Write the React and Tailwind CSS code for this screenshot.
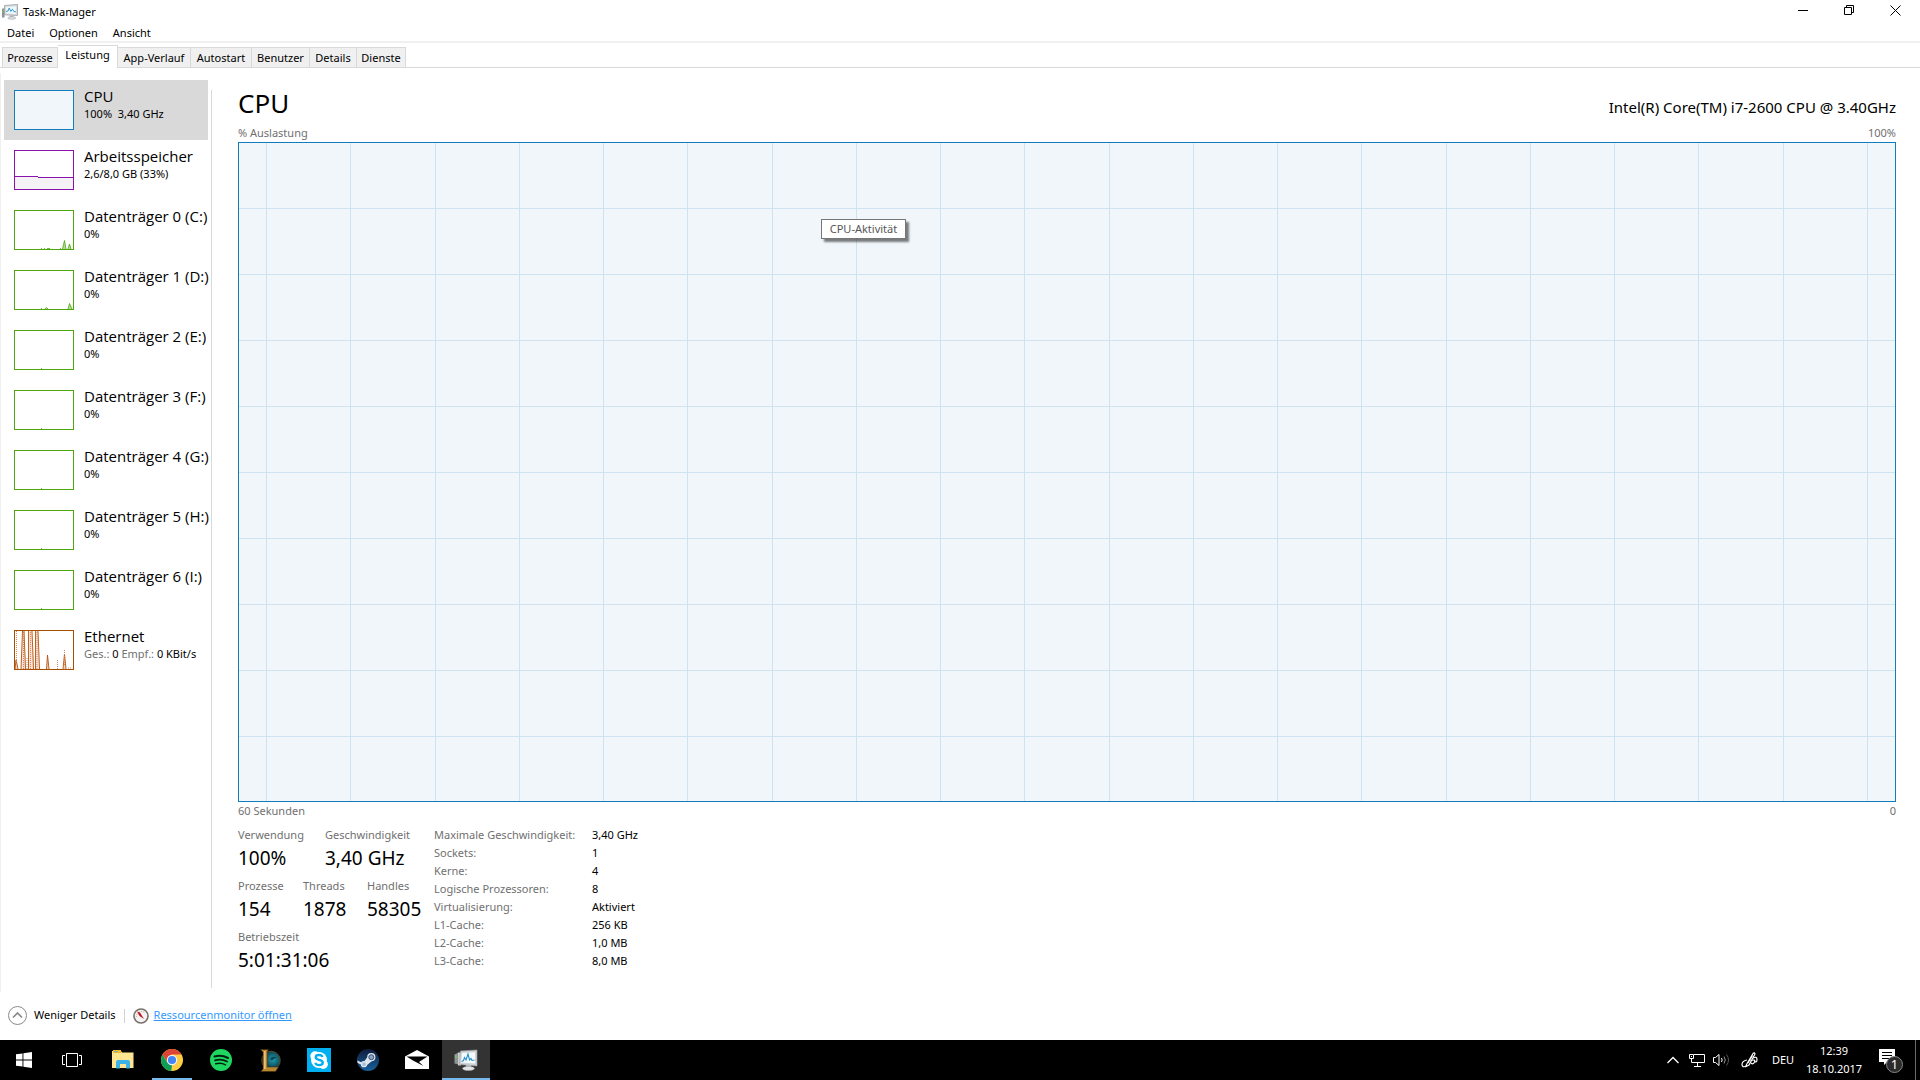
import React, { useState } from 'react';

const tabs = [
  { label: 'Prozesse', width: 'w-[56px]' },
  { label: 'Leistung', width: 'w-[60px]' },
  { label: 'App-Verlauf', width: 'w-[73px]' },
  { label: 'Autostart', width: 'w-[61px]' },
  { label: 'Benutzer', width: 'w-[58px]' },
  { label: 'Details', width: 'w-[47px]' },
  { label: 'Dienste', width: 'w-[49px]' }
];

const tick = 'M27 38.5h1';

const resources = [
  { name: 'CPU', value: '100%  3,40 GHz', kind: 'cpu' },
  { name: 'Arbeitsspeicher', value: '2,6/8,0 GB (33%)', kind: 'memory' },
  {
    name: 'Datenträger 0 (C:)',
    value: '0%',
    kind: 'disk',
    path: 'M27 38.5h1M30 38.5h1M33 38.5h3M46 38.5h1M48.5 39L50.5 30.5L52 39M54 39L55.5 34L57 39'
  },
  { name: 'Datenträger 1 (D:)', value: '0%', kind: 'disk', path: 'M27 38.5h1M31 39L32.5 37.5L34 39M54 39L55.5 33.5L58 39' },
  { name: 'Datenträger 2 (E:)', value: '0%', kind: 'disk', path: tick },
  { name: 'Datenträger 3 (F:)', value: '0%', kind: 'disk', path: tick },
  { name: 'Datenträger 4 (G:)', value: '0%', kind: 'disk', path: tick },
  { name: 'Datenträger 5 (H:)', value: '0%', kind: 'disk', path: tick },
  { name: 'Datenträger 6 (I:)', value: '0%', kind: 'disk', path: tick },
  { name: 'Ethernet', kind: 'network' }
];

const details = [
  ['Maximale Geschwindigkeit:', '3,40 GHz'],
  ['Sockets:', '1'],
  ['Kerne:', '4'],
  ['Logische Prozessoren:', '8'],
  ['Virtualisierung:', 'Aktiviert'],
  ['L1-Cache:', '256 KB'],
  ['L2-Cache:', '1,0 MB'],
  ['L3-Cache:', '8,0 MB']
];

function MonitorIcon({ size }) {
  return (
    <svg width={size} height={size} viewBox="0 0 16 16" aria-hidden="true">
      <path d="M0 4.5h2.5v9H0z" fill="#8d9296" />
      <path d="M.5 5.5h1v3h-1z" fill="#7fc65b" />
      <path d="M2.5 1.5L15.5.5v11l-13-.7z" fill="#d9dcde" stroke="#8d9296" strokeWidth=".7" />
      <path d="M4 3l10-.8v7.9L4 9.6z" fill="#eaf7fd" />
      <path d="M4 7.5l2-.5 1.2-3 1.6 3.4 1.6-2.2 1.4 2.3 2.2.3" fill="none" stroke="#2a8fc8" strokeWidth=".9" />
      <path d="M8 11.2h3.2l.5 2.3H7.6z" fill="#b4b8bb" />
      <ellipse cx="9.8" cy="14" rx="4" ry="1.3" fill="#dcdfe1" stroke="#9a9ea1" strokeWidth=".5" />
    </svg>
  );
}

function Thumbnail({ kind, path }) {
  return (
    <svg width="60" height="40" viewBox="0 0 60 40" className="shrink-0" aria-hidden="true">
      {kind === 'cpu' && <rect x=".5" y=".5" width="59" height="39" fill="#f1f6fa" stroke="#117dbb" />}
      {kind === 'memory' && (
        <>
          <rect x=".5" y=".5" width="59" height="39" fill="#fff" />
          <path d="M1 26.5h23v1h35V39H1z" fill="#f4f2f4" />
          <path d="M1 26.5h23M24 27.5h35" stroke="#8b12ae" fill="none" />
          <rect x=".5" y=".5" width="59" height="39" fill="none" stroke="#8b12ae" />
        </>
      )}
      {kind === 'disk' && (
        <>
          <rect x=".5" y=".5" width="59" height="39" fill="#fff" stroke="#4da60c" />
          <path d={path} fill="#b8dc9b" stroke="#4da60c" strokeWidth=".8" />
        </>
      )}
      {kind === 'network' && (
        <>
          <rect x=".5" y=".5" width="59" height="39" fill="#fff" />
          <path d="M7 39L8.5 1h2L12 39zM14 39L15 1h3l2 38zM21 39L21.5 1h2.5L25.5 39z" fill="#f6e2d6" />
          <path
            d="M1 39L2 30L3 34L4 39M7 39L8.5 1M10 1L11.5 39M14.5 39V1M18 1L19.5 39M21.5 39V1M24 1L25.5 39M32.5 39L33.5 25L35 39M49 39L50.5 24L52 39"
            fill="#e0a988"
            fillOpacity=".5"
            stroke="#b35410"
            strokeWidth=".9"
          />
          <path d="M2.5 1V33M9.5 2V39M13 39V27M16.5 2V39M23 2V39M43.5 39V30M50.5 20V36M54 38h3" fill="none" stroke="#dc8559" strokeDasharray="1 1" />
          <rect x=".5" y=".5" width="59" height="39" fill="none" stroke="#a74f01" />
        </>
      )}
    </svg>
  );
}

function UsageChart() {
  const columns = Array.from({ length: 20 }, (_, i) => `${(((27.5 + i * 84.26) / 1656) * 100).toFixed(3)}%`);
  const rows = Array.from({ length: 9 }, (_, i) => `${((((i + 1) * 66 - 0.5) / 658) * 100).toFixed(3)}%`);

  return (
    <div className="relative flex-1 min-h-0 border border-[#117dbb] bg-[#f1f6fa]">
      <svg className="absolute inset-0 w-full h-full" stroke="#cee2f0" shapeRendering="crispEdges" aria-hidden="true">
        {columns.map((x) => (
          <line key={x} x1={x} x2={x} y1="0" y2="100%" />
        ))}
        {rows.map((y) => (
          <line key={y} x1="0" x2="100%" y1={y} y2={y} />
        ))}
      </svg>
      <div
        role="tooltip"
        className="absolute left-[582px] top-[76px] h-5 min-w-[85px] px-[5px] border border-[#767676] bg-white text-center text-[11px] leading-[18px] text-[#575757] whitespace-nowrap shadow-[3px_3px_2px_#00000080]"
      >
        CPU-Aktivität
      </div>
    </div>
  );
}

function Stat({ label, value, className }) {
  return (
    <div className={className}>
      <dt className="text-[11px] leading-[18px] text-[#707070]">{label}</dt>
      <dd className="text-[19px] leading-7">{value}</dd>
    </div>
  );
}

const taskbarApps = [
  {
    name: 'Explorer',
    icon: (
      <svg width="22" height="20" viewBox="0 0 22 20">
        <path d="M0 1h9l1 1.5h11.5V18H0z" fill="#ffe592" />
        <path d="M1 0h8v3H1z" fill="#f7b928" />
        <path d="M2.5 1h3v1.2h-3z" fill="#4db6e5" />
        <path d="M4 18.5V12q0-2 2-2h10q2 0 2 2v6.5h-4V14H8v4.5z" fill="#3bb1e8" />
      </svg>
    )
  },
  {
    name: 'Chrome',
    running: true,
    icon: (
      <svg width="22" height="22" viewBox="0 0 22 22">
        <circle cx="11" cy="11" r="11" fill="#ffcd41" />
        <path d="M1.5 5.5A11 11 0 0 1 20.5 5.5H11L6.7 13.5z" fill="#db4437" />
        <path d="M1.5 5.5L6.5 13.7L11 16L10.3 22A11 11 0 0 1 1.5 5.5z" fill="#0f9d58" />
        <circle cx="11" cy="11" r="5.2" fill="#f5f5f5" />
        <circle cx="11" cy="11" r="4.1" fill="#4285f4" />
      </svg>
    )
  },
  {
    name: 'Spotify',
    icon: (
      <svg width="22" height="22" viewBox="0 0 22 22">
        <circle cx="11" cy="11" r="11" fill="#1ed760" />
        <g fill="none" stroke="#06200f" strokeLinecap="round">
          <path d="M4.5 7.5Q11.5 5.5 18 9" strokeWidth="2.1" />
          <path d="M5 11.3Q11.5 9.5 17 12.5" strokeWidth="1.8" />
          <path d="M5.7 14.8Q11 13.3 15.5 15.8" strokeWidth="1.5" />
        </g>
      </svg>
    )
  },
  {
    name: 'League of Legends',
    icon: (
      <svg width="22" height="23" viewBox="0 0 22 23">
        <defs>
          <radialGradient id="lol" cx=".6" cy=".45" r=".55">
            <stop offset="0" stopColor="#1f9fae" />
            <stop offset="1" stopColor="#08303f" />
          </radialGradient>
        </defs>
        <circle cx="12" cy="11.5" r="9.3" fill="url(#lol)" stroke="#6d532a" strokeWidth=".8" />
        <path d="M11 10q3-4 7-1-3-.5-5 2.5z" fill="#0a4354" />
        <path d="M1.5.5h8l-1.2 2V18h11.2l-3 4.5H1.8L4 20V3z" fill="#b9862f" stroke="#3a2710" strokeWidth=".5" />
        <path d="M5 2h1.7v18H5z" fill="#e8c374" />
      </svg>
    )
  },
  {
    name: 'Skype',
    icon: (
      <svg width="24" height="24" viewBox="0 0 24 24">
        <path d="M0 0h24v24H0z" fill="#00aff0" />
        <circle cx="12" cy="12" r="8" fill="#fff" />
        <circle cx="8" cy="8" r="4.7" fill="#fff" />
        <circle cx="16.2" cy="16.2" r="4.7" fill="#fff" />
        <path
          d="M15.8 8.8Q14.5 7 12 7Q8.7 7 8.7 9.3Q8.7 11.2 12 11.8Q15.8 12.5 15.8 14.6Q15.8 17.2 12.2 17.2Q9.2 17.2 8.2 14.9"
          fill="none"
          stroke="#00aff0"
          strokeWidth="2.3"
        />
      </svg>
    )
  },
  {
    name: 'Steam',
    icon: (
      <svg width="22" height="22" viewBox="0 0 22 22">
        <defs>
          <linearGradient id="steam" x1="0" y1="0" x2="0" y2="1">
            <stop offset="0" stopColor="#101a3c" />
            <stop offset="1" stopColor="#17619c" />
          </linearGradient>
        </defs>
        <circle cx="11" cy="11" r="11" fill="url(#steam)" />
        <path d="M.2 11.5L6 14L10.3 8.3L15 12L9.5 16.5L6.5 18L4 15.5L.7 14z" fill="#dfe6ee" />
        <circle cx="7" cy="15.2" r="2.5" fill="#a9bfd6" stroke="#dfe6ee" strokeWidth="1.3" />
        <circle cx="14.3" cy="8.2" r="4.1" fill="#dfe6ee" />
        <circle cx="14.3" cy="8.2" r="2.5" fill="#8ea3bd" stroke="#1c3564" strokeWidth=".8" />
      </svg>
    )
  },
  {
    name: 'Mail',
    icon: (
      <svg width="24" height="20" viewBox="0 0 24 20">
        <path d="M0 6.5L12 0l12 6.5V19H0z" fill="#fff" />
        <path d="M1.5 6.5h21L14 12l4.5 4L8 10.5z" fill="#000" />
      </svg>
    )
  },
  {
    name: 'Task-Manager',
    running: true,
    active: true,
    icon: (
      <svg width="24" height="22" viewBox="0 0 24 22">
        <path d="M.5 5.5L4.5 3.5v12l-4-1z" fill="#8e9396" />
        <path d="M1.2 6.5h1.5V9H1.2z" fill="#7fc65b" />
        <path d="M4 3.5h3v13H4z" fill="#c9cccf" />
        <path d="M6.5 2L23 1v16L5.5 15.5z" fill="#cfd2d4" stroke="#9a9ea1" strokeWidth=".6" />
        <path d="M8 4l13-.8v11.3L7 13.5z" fill="#f2fafe" />
        <path d="M7.5 12.5l2-1 1-3L12 11l2-6 1.5 6L17 9.5l1 2 2.5-.5" fill="none" stroke="#2a8fc8" strokeWidth="1.1" />
        <path d="M12 16h5l.5 3h-6z" fill="#b4b8bb" />
        <ellipse cx="14.5" cy="19.5" rx="6" ry="2" fill="#e3e5e7" stroke="#9a9ea1" strokeWidth=".5" />
      </svg>
    )
  }
];

function Taskbar() {
  return (
    <footer className="flex h-10 shrink-0 bg-black text-white text-[11px]">
      <button aria-label="Start" className="flex w-12 items-center justify-center">
        <svg width="16" height="16" viewBox="0 0 16 16" fill="#fff">
          <path d="M0 2.3L6.5 1.4V7.5H0zM7.4 1.2L16 0v7.5H7.4zM0 8.5h6.5v6.1L0 13.7zM7.4 8.5H16V16l-8.6-1.2z" />
        </svg>
      </button>
      <button aria-label="Taskansicht" className="flex w-12 items-center justify-center">
        <svg width="20" height="14" viewBox="0 0 20 14" fill="none" stroke="#fff">
          <path d="M4.5.5h11v13h-11zM3 2.5H.5v9H3M17 2.5h2.5v9H17" />
        </svg>
      </button>
      <div className="flex gap-px ml-[3px]">
        {taskbarApps.map((app) => (
          <button
            key={app.name}
            aria-label={app.name}
            className={`relative flex w-12 items-center justify-center ${app.active ? 'bg-[#333]' : ''}`}
          >
            {app.icon}
            {app.running && (
              <span className={`absolute bottom-0 h-0.5 bg-[#76b9ed] ${app.active ? 'inset-x-0' : 'inset-x-1'}`} />
            )}
          </button>
        ))}
      </div>

      {/* Tray */}
      <div className="flex items-center ml-auto">
        <button aria-label="Ausgeblendete Symbole" className="flex w-6 justify-center">
          <svg width="12" height="8" viewBox="0 0 12 8" fill="none" stroke="#fff" strokeWidth="1.3">
            <path d="M.5 7L6 1.5L11.5 7" />
          </svg>
        </button>
        <button aria-label="Netzwerk" className="flex w-6 justify-center">
          <svg width="16" height="14" viewBox="0 0 16 14" fill="none" stroke="#fff">
            <path d="M5 1.5h10.5v8H2.5V6M.5 1.5h4v4h-4zM8.5 10v3M5 13.5h7M2 3.5h1" />
          </svg>
        </button>
        <button aria-label="Lautstärke" className="flex w-6 justify-center">
          <svg width="17" height="14" viewBox="0 0 17 14" fill="none" stroke="#fff">
            <path d="M.5 4.5h2L6 1.5v11L2.5 9.5h-2z" />
            <path d="M8.5 5q1.3 2 0 4" />
            <path d="M11 3.5q2.6 3.5 0 7" stroke="#999" />
            <path d="M13.5 1.5q4 5.5 0 11" stroke="#555" />
          </svg>
        </button>
        <button aria-label="Windows Ink" className="flex w-8 justify-center">
          <svg width="17" height="16" viewBox="0 0 17 16" fill="none" stroke="#fff" strokeWidth="1.2">
            <path d="M5.5 12.5L12 1.5q1.5-1.5 2 .5L8 13l-3 1.5zM7 11L11.5 3.5" />
            <path d="M6 8Q1 9 1 12.5T5.5 14M10 11q2 2 3.5-1T9.5 8.5M13 9.5q3 1.5 3-2T12 6" />
          </svg>
        </button>
        <button className="w-8 pl-1">DEU</button>
        <button className="w-[74px] leading-[18px] text-center">
          12:39
          <br />
          18.10.2017
        </button>
        <button aria-label="Benachrichtigungen" className="flex w-[44px] pl-2">
          <svg width="25" height="25" viewBox="0 0 25 25">
            <path d="M0 1h16v13H8l-3 3v-3H0z" fill="#fff" />
            <path d="M3 4.5h10M3 7.5h10M3 10.5h8" stroke="#000" />
            <circle cx="15.5" cy="16.5" r="8" fill="#2b2b2b" stroke="#888" />
            <text x="15.5" y="21" textAnchor="middle" fill="#fff" fontSize="13">
              1
            </text>
          </svg>
        </button>
        <button aria-label="Desktop anzeigen" className="w-[5px] h-10 border-l border-[#6b6b6b]" />
      </div>
    </footer>
  );
}

export default function App() {
  const [activeTab, setActiveTab] = useState('Leistung');
  const [selected, setSelected] = useState('CPU');

  return (
    <div className="flex flex-col h-screen bg-white text-black font-['Noto_Sans','Open_Sans',sans-serif]">
      {/* Title bar */}
      <header className="flex h-6 shrink-0 items-center px-0.5">
        <MonitorIcon size={16} />
        <h1 className="ml-[5px] text-[11px]">Task-Manager</h1>
        <div className="flex ml-auto pb-1">
          <button aria-label="Minimieren" className="flex w-[46px] justify-center">
            <svg width="10" height="11" viewBox="0 0 10 11" stroke="#000">
              <path d="M0 5.5h10" />
            </svg>
          </button>
          <button aria-label="Verkleinern" className="flex w-[46px] justify-center">
            <svg width="10" height="11" viewBox="0 0 10 11" fill="none" stroke="#000">
              <path d="M.5 2.5h7v7h-7zM2.5 2.5v-2h7v7h-2" />
            </svg>
          </button>
          <button aria-label="Schließen" className="flex w-[46px] justify-center">
            <svg width="11" height="11" viewBox="0 0 11 11" stroke="#000">
              <path d="M.5.5l10 10M10.5.5l-10 10" />
            </svg>
          </button>
        </div>
      </header>

      <nav className="flex shrink-0 gap-[15px] pl-[7px] border-b-2 border-[#f0f0f0] text-[11px] leading-[17px]">
        <button>Datei</button>
        <button>Optionen</button>
        <button>Ansicht</button>
      </nav>

      <div role="tablist" className="flex h-[25px] shrink-0 items-end pl-0.5 border-b border-[#d9d9d9] text-[11px] leading-[18px]">
        {tabs.map(({ label, width }) => (
          <button
            key={label}
            role="tab"
            aria-selected={label === activeTab}
            onClick={() => setActiveTab(label)}
            className={`${width} border-t border-r border-[#d9d9d9] ${
              label === activeTab ? 'h-[23px] -mb-px pb-1 bg-white' : 'h-5 first:border-l bg-[#f0f0f0]'
            }`}
          >
            {label}
          </button>
        ))}
      </div>

      <main className="flex flex-1 min-h-0 mt-[5px] pl-[3px] border-l border-[#f0f0f0]">
        {/* Resource list */}
        <div className="w-[204px] shrink-0 pt-[7px]">
          {resources.map((item) => (
            <button
              key={item.name}
              onClick={() => setSelected(item.name)}
              className={`flex w-full h-[60px] pt-[10px] pl-[10px] gap-[10px] text-left whitespace-nowrap ${item.name === selected ? 'bg-[#d9d9d9]' : ''}`}
            >
              <Thumbnail kind={item.kind} path={item.path} />
              <span className="flex flex-col -mt-1">
                <span className="text-[15px] leading-5 font-['Open_Sans','Noto_Sans',sans-serif]">{item.name}</span>
                <span className="text-[11px] leading-[15px] whitespace-pre">
                  {item.value || (
                    <>
                      <span className="text-[#707070]">Ges.:</span> 0 <span className="text-[#707070]">Empf.:</span> 0 KBit/s
                    </>
                  )}
                </span>
              </span>
            </button>
          ))}
        </div>
        <div className="w-px shrink-0 ml-[3px] mt-[17px] mb-1 bg-[#d9d9d9]" />

        {/* CPU details */}
        <section className="flex flex-col flex-1 min-w-0 pt-[9px] pl-[26px] pr-6">
          <div className="flex h-[42px] shrink-0 items-baseline justify-between">
            <h2 className="text-[26px] leading-[42px]">CPU</h2>
            <p className="text-[15px]">Intel(R) Core(TM) i7-2600 CPU @ 3.40GHz</p>
          </div>
          <div className="flex justify-between text-[11px] leading-[18px] text-[#707070]">
            <span>% Auslastung</span>
            <span>100%</span>
          </div>
          <UsageChart />
          <div className="flex justify-between text-[11px] leading-[18px] text-[#707070]">
            <span>60 Sekunden</span>
            <span>0</span>
          </div>

          <div className="flex shrink-0 mt-[6px] pb-[18px]">
            <dl className="flex flex-col w-[196px] gap-[5px]">
              <div className="flex">
                <Stat label="Verwendung" value="100%" className="w-[87px]" />
                <Stat label="Geschwindigkeit" value="3,40 GHz" />
              </div>
              <div className="flex">
                <Stat label="Prozesse" value="154" className="w-[65px]" />
                <Stat label="Threads" value="1878" className="w-16" />
                <Stat label="Handles" value="58305" />
              </div>
              <Stat label="Betriebszeit" value="5:01:31:06" />
            </dl>
            <table className="self-start text-[11px] leading-[18px] text-left">
              <tbody>
                {details.map(([label, value]) => (
                  <tr key={label}>
                    <th scope="row" className="w-[158px] p-0 font-normal text-[#707070]">
                      {label}
                    </th>
                    <td className="p-0">{value}</td>
                  </tr>
                ))}
              </tbody>
            </table>
          </div>
        </section>
      </main>

      <div className="flex h-12 shrink-0 items-center pl-2 pb-px text-[11px]">
        <button className="flex items-center gap-[7px]">
          <svg width="19" height="19" viewBox="0 0 19 19" fill="none" stroke="#8a8a8a">
            <circle cx="9.5" cy="9.5" r="9" />
            <path d="M5 11.5L9.5 7l4.5 4.5" strokeWidth="1.7" />
          </svg>
          Weniger Details
        </button>
        <span className="w-px h-[14px] mx-2 bg-[#d0d0d0]" />
        <svg width="16" height="16" viewBox="0 0 16 16" aria-hidden="true">
          <circle cx="8" cy="8" r="7" fill="#f4f4f4" stroke="#77706b" strokeWidth="1.6" />
          <path d="M3.5 9a5 5 0 0 1 8.5-4" fill="none" stroke="#aaa" strokeDasharray="1 1" />
          <path d="M4 3.5l3 1L11 11 6.5 8z" fill="#c8141e" />
        </svg>
        <a href="#resmon" className="ml-[5px] text-[#3399ff] underline">
          Ressourcenmonitor öffnen
        </a>
      </div>

      <Taskbar />
    </div>
  );
}
